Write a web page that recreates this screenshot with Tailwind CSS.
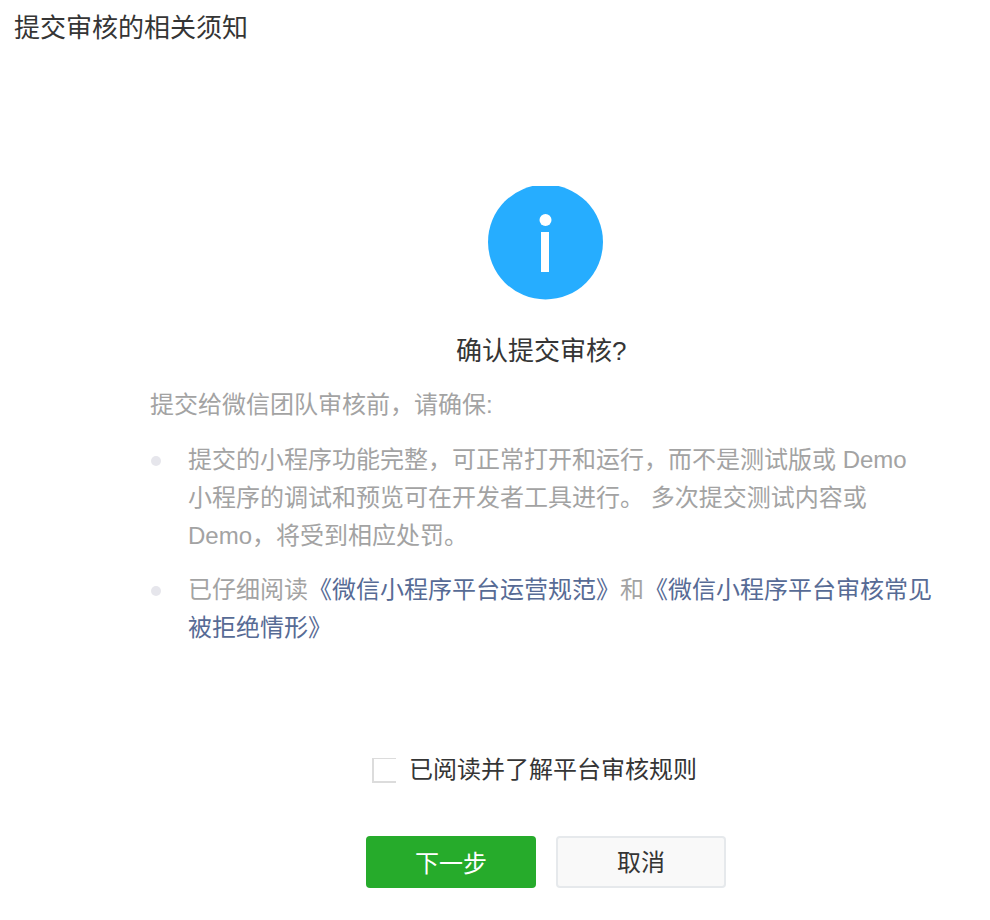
<!DOCTYPE html>
<html lang="zh">
<head>
<meta charset="utf-8">
<title>提交审核的相关须知</title>
<script src="https://cdn.jsdelivr.net/npm/@tailwindcss/browser@4"></script>
</head>
<body class="bg-white font-['Liberation_Sans','Noto_Sans_CJK_SC',sans-serif] text-[#353535]">
  <div class="h-[920px] w-[990px] overflow-hidden">
    <h1 class="pl-[14px] pt-[9px] text-[26px] font-normal leading-[38px]">提交审核的相关须知</h1>

    <div class="mt-[139px] flex justify-center pl-[101px]">
      <svg class="h-[115px] w-[115px]" viewBox="0 0 115 115">
        <circle cx="57.5" cy="56" r="57.5" fill="#26adff"/>
        <circle cx="57.5" cy="34" r="6" fill="#fff"/>
        <rect x="53" y="46" width="8" height="40" fill="#fff"/>
      </svg>
    </div>

    <p class="mt-[31px] pl-[456px] text-[26px] leading-[38px]">确认提交审核?</p>

    <div class="mt-[16px] pl-[150px] pr-[56px] text-[24px] leading-[38px] text-[#a3a3a3]">
      <p>提交给微信团队审核前，请确保:</p>
      <ul class="mt-[17px] flex flex-col gap-[16px]">
        <li class="relative pl-[38px]">
          <span class="absolute left-[1px] top-[15px] h-[10px] w-[10px] rounded-full bg-[#e6e6ec]"></span>
          提交的小程序功能完整，可正常打开和运行，而不是测试版或 Demo 小程序的调试和预览可在开发者工具进行。 多次提交测试内容或 Demo，将受到相应处罚。
        </li>
        <li class="relative pl-[38px]">
          <span class="absolute left-[1px] top-[15px] h-[10px] w-[10px] rounded-full bg-[#e6e6ec]"></span>
          已仔细阅读<a class="text-[#576b95]">《微信小程序平台运营规范》</a>和<a class="text-[#576b95]">《微信小程序平台审核常见</a><br><a class="text-[#576b95]">被拒绝情形》</a>
        </li>
      </ul>
    </div>

    <label class="mt-[104px] flex items-center pl-[372px] text-[24px] leading-[38px]">
      <span class="h-[25px] w-[24px] border-b-2 border-l-2 border-t border-[#dcdcdc]"></span>
      <span class="ml-[13px]">已阅读并了解平台审核规则</span>
    </label>

    <div class="mt-[47px] flex gap-[20px] pl-[366px]">
      <button class="h-[52px] w-[170px] rounded-[4px] bg-[#26ab2b] pt-[3px] text-[24px] text-white">下一步</button>
      <button class="h-[52px] w-[170px] rounded-[4px] border-2 border-[#e6e9ec] bg-[#f9f9f9] pt-[2px] text-[24px] text-[#353535]">取消</button>
    </div>
  </div>
</body>
</html>
